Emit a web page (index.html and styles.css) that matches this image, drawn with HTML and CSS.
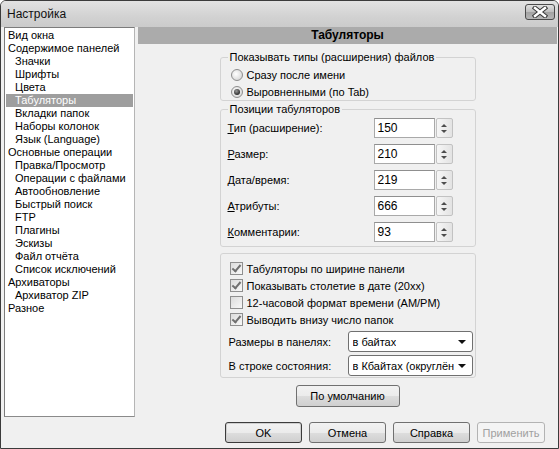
FILE: index.html
```html
<!DOCTYPE html>
<html lang="ru">
<head>
<meta charset="utf-8">
<title>Настройка</title>
<link rel="stylesheet" href="styles.css">
</head>
<body>
<div class="window">
  <div class="titlebar">
    <span class="title">Настройка</span>
    <button class="close" aria-label="Закрыть">
      <svg width="16" height="12" viewBox="0 0 16 12"><path d="M3 2 L13 10 M13 2 L3 10" stroke="#3a3a3a" stroke-width="4.5" stroke-linecap="square" fill="none"/><path d="M3 2 L13 10 M13 2 L3 10" stroke="#ffffff" stroke-width="2.4" stroke-linecap="square" fill="none"/></svg>
    </button>
  </div>
  <div class="body">
    <ul class="tree">
      <li>Вид окна</li>
      <li>Содержимое панелей</li>
      <li class="sub">Значки</li>
      <li class="sub">Шрифты</li>
      <li class="sub">Цвета</li>
      <li class="sub selected">Табуляторы</li>
      <li class="sub">Вкладки папок</li>
      <li class="sub">Наборы колонок</li>
      <li class="sub">Язык (Language)</li>
      <li>Основные операции</li>
      <li class="sub">Правка/Просмотр</li>
      <li class="sub">Операции с файлами</li>
      <li class="sub">Автообновление</li>
      <li class="sub">Быстрый поиск</li>
      <li class="sub">FTP</li>
      <li class="sub">Плагины</li>
      <li class="sub">Эскизы</li>
      <li class="sub">Файл отчёта</li>
      <li class="sub">Список исключений</li>
      <li>Архиваторы</li>
      <li class="sub">Архиватор ZIP</li>
      <li>Разное</li>
    </ul>
    <div class="main">
      <div class="header">Табуляторы</div>
      <fieldset class="group group-types">
        <legend>Показывать типы (расширения) файлов</legend>
        <div class="radios">
          <label class="opt"><span class="radio"></span>Сразу после имени</label>
          <label class="opt"><span class="radio checked"></span>Выровненными (по Tab)</label>
        </div>
      </fieldset>
      <fieldset class="group group-pos">
        <legend>Позиции табуляторов</legend>
        <div class="pos-grid">
          <span class="lbl"><u>Т</u>ип (расширение):</span>
          <span class="spin"><span class="edit">150</span><span class="arrows"><i class="up"></i><i class="down"></i></span></span>
          <span class="lbl"><u>Р</u>азмер:</span>
          <span class="spin"><span class="edit">210</span><span class="arrows"><i class="up"></i><i class="down"></i></span></span>
          <span class="lbl"><u>Д</u>ата/время:</span>
          <span class="spin"><span class="edit">219</span><span class="arrows"><i class="up"></i><i class="down"></i></span></span>
          <span class="lbl"><u>А</u>трибуты:</span>
          <span class="spin"><span class="edit">666</span><span class="arrows"><i class="up"></i><i class="down"></i></span></span>
          <span class="lbl"><u>К</u>омментарии:</span>
          <span class="spin"><span class="edit">93</span><span class="arrows"><i class="up"></i><i class="down"></i></span></span>
        </div>
      </fieldset>
      <div class="group group-opts">
        <label class="opt chk"><span class="check on"></span>Табуляторы по ширине панели</label>
        <label class="opt chk"><span class="check on"></span>Показывать столетие в дате (20xx)</label>
        <label class="opt chk"><span class="check"></span>12-часовой формат времени (AM/PM)</label>
        <label class="opt chk"><span class="check on"></span>Выводить внизу число папок</label>
        <div class="combo-grid">
          <span class="lbl">Размеры в панелях:</span>
          <span class="combo"><span class="combo-text">в байтах</span><i class="tri"></i></span>
          <span class="lbl">В строке состояния:</span>
          <span class="combo"><span class="combo-text">в Кбайтах (округлён</span><i class="tri"></i></span>
        </div>
      </div>
      <button class="btn btn-default">По умолчанию</button>
    </div>
  </div>
  <div class="buttons">
    <button class="btn btn-ok">OK</button>
    <button class="btn btn-w">Отмена</button>
    <button class="btn btn-w">Справка</button>
    <button class="btn btn-apply" disabled>Применить</button>
  </div>
</div>
</body>
</html>
```
FILE: styles.css
```css
* { box-sizing: border-box; }
html, body { margin: 0; padding: 0; background: #ffffff; }
body {
  font-family: "Liberation Sans", Arial, sans-serif;
  font-size: 11px;
  color: #000;
}
.window {
  width: 559px;
  height: 449px;
  border: 1px solid #3b3b3b;
  border-radius: 6px 6px 0 0;
  background: #f0f0f0;
  display: flex;
  flex-direction: column;
  overflow: hidden;
}
.titlebar {
  height: 26px;
  flex: none;
  display: flex;
  align-items: center;
  justify-content: space-between;
  padding: 0 3px 0 6px;
  background: linear-gradient(#e2e2e2, #d2d2d2 60%, #cbcbcb);
}
.title { font-size: 12px; color: #111; }
.close {
  width: 30px;
  height: 16px;
  margin-top: -4px;
  padding: 0;
  border: 1px solid #4a4a4a;
  border-radius: 3px;
  background: linear-gradient(#e0e0e0, #bdbdbd 50%, #a2a2a2 51%, #b6b6b6);
  display: flex;
  align-items: center;
  justify-content: center;
}
.close svg { display: block; }
.body {
  height: 390px;
  flex: none;
  display: flex;
  padding: 0 1px 0 3px;
  gap: 3px;
}
.tree {
  width: 131px;
  flex: none;
  margin: 0;
  padding: 1px;
  list-style: none;
  background: #fff;
  border: 1px solid #7c7c7c;
  border-right-color: #b5b5b5;
  border-bottom-color: #8a8a8a;
}
.tree li {
  height: 13px;
  line-height: 13px;
  padding-left: 2px;
  white-space: nowrap;
  font-size: 11px;
}
.tree li.sub { padding-left: 9px; }
.tree li.selected { background: #9e9e9e; color: #fff; }
.main {
  flex: 1;
  display: flex;
  flex-direction: column;
  align-items: center;
}
.header {
  align-self: stretch;
  height: 17px;
  line-height: 17px;
  background: #ababab;
  font-weight: bold;
  font-size: 12px;
  text-align: center;
}
.group {
  width: 256px;
  margin: 0;
  border: 1px solid #d3d3d3;
  border-radius: 3px;
  min-width: 0;
}
fieldset.group { padding: 0 7px; }
legend {
  padding: 0 2px;
  line-height: 14px;
  height: 14px;
}
.group-types { margin-top: 6px; }
.radios { margin-top: 2px; }
.opt {
  height: 17px;
  display: flex;
  align-items: center;
  white-space: nowrap;
}
.radio {
  width: 12px;
  height: 12px;
  margin: 0 4px 0 3px;
  border-radius: 50%;
  border: 1px solid #8e8e8e;
  background: radial-gradient(circle at 40% 40%, #ffffff, #dcdcdc 70%, #c8c8c8);
  position: relative;
  flex: none;
}
.radio.checked::after {
  content: "";
  position: absolute;
  left: 2px; top: 2px;
  width: 6px; height: 6px;
  border-radius: 50%;
  background: radial-gradient(circle at 40% 35%, #9a9a9a, #2e2e2e 70%);
}
.group-pos { margin-top: 1px; }
.pos-grid {
  display: grid;
  grid-template-columns: 146px auto;
  row-gap: 6px;
  padding: 2px 0 4px;
  align-items: center;
}
.spin { display: flex; height: 20px; }
.edit {
  width: 61px;
  height: 20px;
  border: 1px solid #a9a9a9;
  border-top-color: #8f8f8f;
  background: #fff;
  padding-left: 3px;
  line-height: 18px;
  font-size: 12px;
}
.arrows {
  width: 17px;
  height: 20px;
  margin-left: 1px;
  border: 1px solid #c2c2c2;
  border-radius: 2px;
  background: linear-gradient(to right, #f6f6f6, #e3e3e3);
  display: flex;
  flex-direction: column;
  align-items: center;
  justify-content: center;
  gap: 3px;
}
.arrows i { width: 0; height: 0; border-left: 3px solid transparent; border-right: 3px solid transparent; }
.arrows .up { border-bottom: 3px solid #4d4d4d; }
.arrows .down { border-top: 3px solid #4d4d4d; }
.group-opts {
  margin-top: 6px;
  padding: 6px 2px 1px 8px;
}
.chk { padding-left: 1px; }
.check {
  width: 13px;
  height: 13px;
  margin-right: 4px;
  border: 1px solid #8f8f8f;
  background: linear-gradient(135deg, #dcdcdc, #f8f8f8);
  position: relative;
  flex: none;
}
.check.on::after {
  content: "";
  position: absolute;
  left: 3px; top: 0px;
  width: 3px; height: 7px;
  border: solid #707070;
  border-width: 0 2px 2px 0;
  transform: rotate(40deg);
}
.combo-grid {
  display: grid;
  grid-template-columns: 119px 125px;
  row-gap: 3px;
  margin-top: 3px;
  align-items: center;
}
.combo {
  height: 21px;
  border: 1px solid #707070;
  border-radius: 3px;
  background: #fff;
  display: flex;
  align-items: center;
  justify-content: space-between;
  padding: 0 6px 0 4px;
  overflow: hidden;
  white-space: nowrap;
}
.combo-text { overflow: hidden; }
.tri {
  flex: none;
  margin-left: 3px;
  width: 0; height: 0;
  border-left: 4px solid transparent;
  border-right: 4px solid transparent;
  border-top: 4px solid #111;
}
.btn {
  font-family: "Liberation Sans", Arial, sans-serif;
  font-size: 11px;
  color: #000;
  height: 22px;
  padding: 0;
  border: 1px solid #707070;
  border-radius: 3px;
  background: linear-gradient(#f2f2f2, #ebebeb 50%, #dddddd 51%, #cfcfcf);
}
.btn-default { width: 104px; margin-top: 7px; }
.buttons {
  display: flex;
  justify-content: flex-end;
  gap: 7px;
  padding: 5px 13px 0 0;
}
.buttons .btn { height: 21px; }
.btn-ok { width: 77px; border-color: #3c3c3c; box-shadow: inset 0 0 0 1px #cfcfcf; }
.btn-w { width: 77px; }
.btn-apply {
  width: 68px;
  color: #a0a0a0;
  border-color: #b3b3b3;
  background: #f4f4f4;
}
```
